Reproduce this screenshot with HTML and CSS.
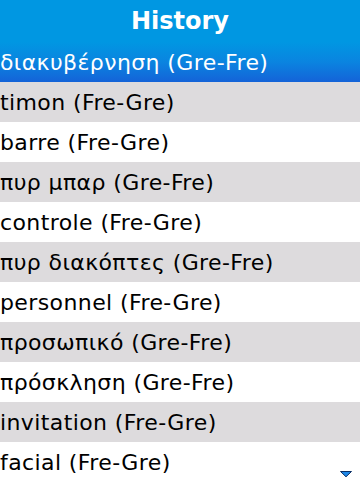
FILE: index.html
```html
<!DOCTYPE html>
<html>
<head>
<meta charset="utf-8">
<link rel="stylesheet" href="styles.css">
</head>
<body>
<div class="screen">
  <div class="title">History</div>
  <ul class="list">
    <li class="row selected">διακυβέρνηση (Gre-Fre)</li>
    <li class="row alt">timon (Fre-Gre)</li>
    <li class="row">barre (Fre-Gre)</li>
    <li class="row alt">πυρ μπαρ (Gre-Fre)</li>
    <li class="row">controle (Fre-Gre)</li>
    <li class="row alt">πυρ διακόπτες (Gre-Fre)</li>
    <li class="row">personnel (Fre-Gre)</li>
    <li class="row alt">προσωπικό (Gre-Fre)</li>
    <li class="row">πρόσκληση (Gre-Fre)</li>
    <li class="row alt">invitation (Fre-Gre)</li>
    <li class="row">facial (Fre-Gre)</li>
  </ul>
  <svg class="more" width="12" height="6" viewBox="0 0 12 6">
    <polygon points="0.5,0.5 11.5,0.5 6,5.8" fill="#1e88e8" stroke="#0b2f66" stroke-width="1"/>
  </svg>
</div>
</body>
</html>
```
FILE: styles.css
```css
html, body {
  margin: 0;
  padding: 0;
  background: #ffffff;
}
.screen {
  position: relative;
  width: 360px;
  height: 480px;
  overflow: hidden;
  font-family: "DejaVu Sans", sans-serif;
  background: #ffffff;
}
.title {
  height: 42px;
  background: #0097e2;
  color: #ffffff;
  font-weight: bold;
  font-size: 24px;
  line-height: 42px;
  text-align: center;
}
.list {
  list-style: none;
  margin: 0;
  padding: 0;
}
.row {
  height: 40px;
  box-sizing: border-box;
  padding: 2px 0 0 0;
  font-size: 22px;
  letter-spacing: 0.4px;
  line-height: 38px;
  color: #000000;
  white-space: nowrap;
  background: #ffffff;
}
.row.alt {
  background: #dddbdd;
}
.row.selected {
  color: #ffffff;
  background: linear-gradient(to bottom, #0097e2 0%, #0a84e0 50%, #1463d8 100%);
}
.more {
  position: absolute;
  right: 8px;
  bottom: 3px;
  display: block;
}
```
